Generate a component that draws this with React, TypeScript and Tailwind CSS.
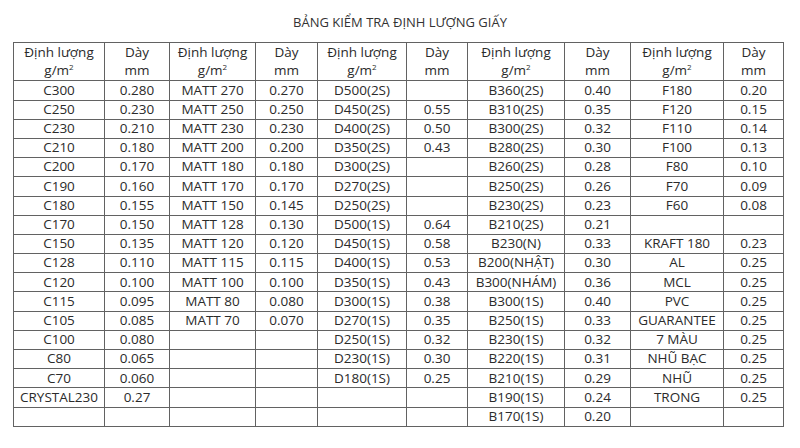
const ROWS: string[][] = [
  ['C300', '0.280', 'MATT 270', '0.270', 'D500(2S)', '', 'B360(2S)', '0.40', 'F180', '0.20'],
  ['C250', '0.230', 'MATT 250', '0.250', 'D450(2S)', '0.55', 'B310(2S)', '0.35', 'F120', '0.15'],
  ['C230', '0.210', 'MATT 230', '0.230', 'D400(2S)', '0.50', 'B300(2S)', '0.32', 'F110', '0.14'],
  ['C210', '0.180', 'MATT 200', '0.200', 'D350(2S)', '0.43', 'B280(2S)', '0.30', 'F100', '0.13'],
  ['C200', '0.170', 'MATT 180', '0.180', 'D300(2S)', '', 'B260(2S)', '0.28', 'F80', '0.10'],
  ['C190', '0.160', 'MATT 170', '0.170', 'D270(2S)', '', 'B250(2S)', '0.26', 'F70', '0.09'],
  ['C180', '0.155', 'MATT 150', '0.145', 'D250(2S)', '', 'B230(2S)', '0.23', 'F60', '0.08'],
  ['C170', '0.150', 'MATT 128', '0.130', 'D500(1S)', '0.64', 'B210(2S)', '0.21', '', ''],
  ['C150', '0.135', 'MATT 120', '0.120', 'D450(1S)', '0.58', 'B230(N)', '0.33', 'KRAFT 180', '0.23'],
  ['C128', '0.110', 'MATT 115', '0.115', 'D400(1S)', '0.53', 'B200(NHẬT)', '0.30', 'AL', '0.25'],
  ['C120', '0.100', 'MATT 100', '0.100', 'D350(1S)', '0.43', 'B300(NHÁM)', '0.36', 'MCL', '0.25'],
  ['C115', '0.095', 'MATT 80', '0.080', 'D300(1S)', '0.38', 'B300(1S)', '0.40', 'PVC', '0.25'],
  ['C105', '0.085', 'MATT 70', '0.070', 'D270(1S)', '0.35', 'B250(1S)', '0.33', 'GUARANTEE', '0.25'],
  ['C100', '0.080', '', '', 'D250(1S)', '0.32', 'B230(1S)', '0.32', '7 MÀU', '0.25'],
  ['C80', '0.065', '', '', 'D230(1S)', '0.30', 'B220(1S)', '0.31', 'NHŨ BẠC', '0.25'],
  ['C70', '0.060', '', '', 'D180(1S)', '0.25', 'B210(1S)', '0.29', 'NHŨ', '0.25'],
  ['CRYSTAL230', '0.27', '', '', '', '', 'B190(1S)', '0.24', 'TRONG', '0.25'],
  ['', '', '', '', '', '', 'B170(1S)', '0.20', '', ''],
]

const WIDTHS = [91, 65, 86, 62, 89, 61, 97, 66, 93, 60]

const cell = 'border-x-[1.5px] border-[#626262] p-0 text-center leading-none whitespace-nowrap'

export default function App() {
  return (
    <div className="w-[800px] h-[448px] bg-white text-[#2b2b2b] font-['Open_Sans',sans-serif]">
      <h1 className="pt-[15px] h-[42px] text-center text-[13px] leading-[15px] text-[#333]">
        BẢNG KIỂM TRA ĐỊNH LƯỢNG GIẤY
      </h1>
      <table className="ml-[13px] w-[770px] table-fixed border-collapse border-[1.5px] border-[#626262] text-[13.5px]">
        <colgroup>
          {WIDTHS.map((w, i) => (
            <col key={i} style={{ width: w }} />
          ))}
        </colgroup>
        <thead>
          <tr className="h-[19.2px]">
            {WIDTHS.map((_, i) => (
              <th key={i} className={`${cell} font-normal`}>
                {i % 2 === 0 ? 'Định lượng' : 'Dày'}
              </th>
            ))}
          </tr>
          <tr className="h-[19.2px] border-b-[1.5px] border-[#626262]">
            {WIDTHS.map((_, i) => (
              <th key={i} className={`${cell} font-normal`}>
                {i % 2 === 0 ? (
                  <>
                    g/m<span className="relative -top-[5px] text-[8px] leading-none">2</span>
                  </>
                ) : (
                  'mm'
                )}
              </th>
            ))}
          </tr>
        </thead>
        <tbody>
          {ROWS.map((row, r) => (
            <tr key={r} className="h-[19.2px] border-b-[1.5px] border-[#626262]">
              {row.map((v, c) => (
                <td key={c} className={cell}>
                  {v}
                </td>
              ))}
            </tr>
          ))}
        </tbody>
      </table>
    </div>
  )
}
